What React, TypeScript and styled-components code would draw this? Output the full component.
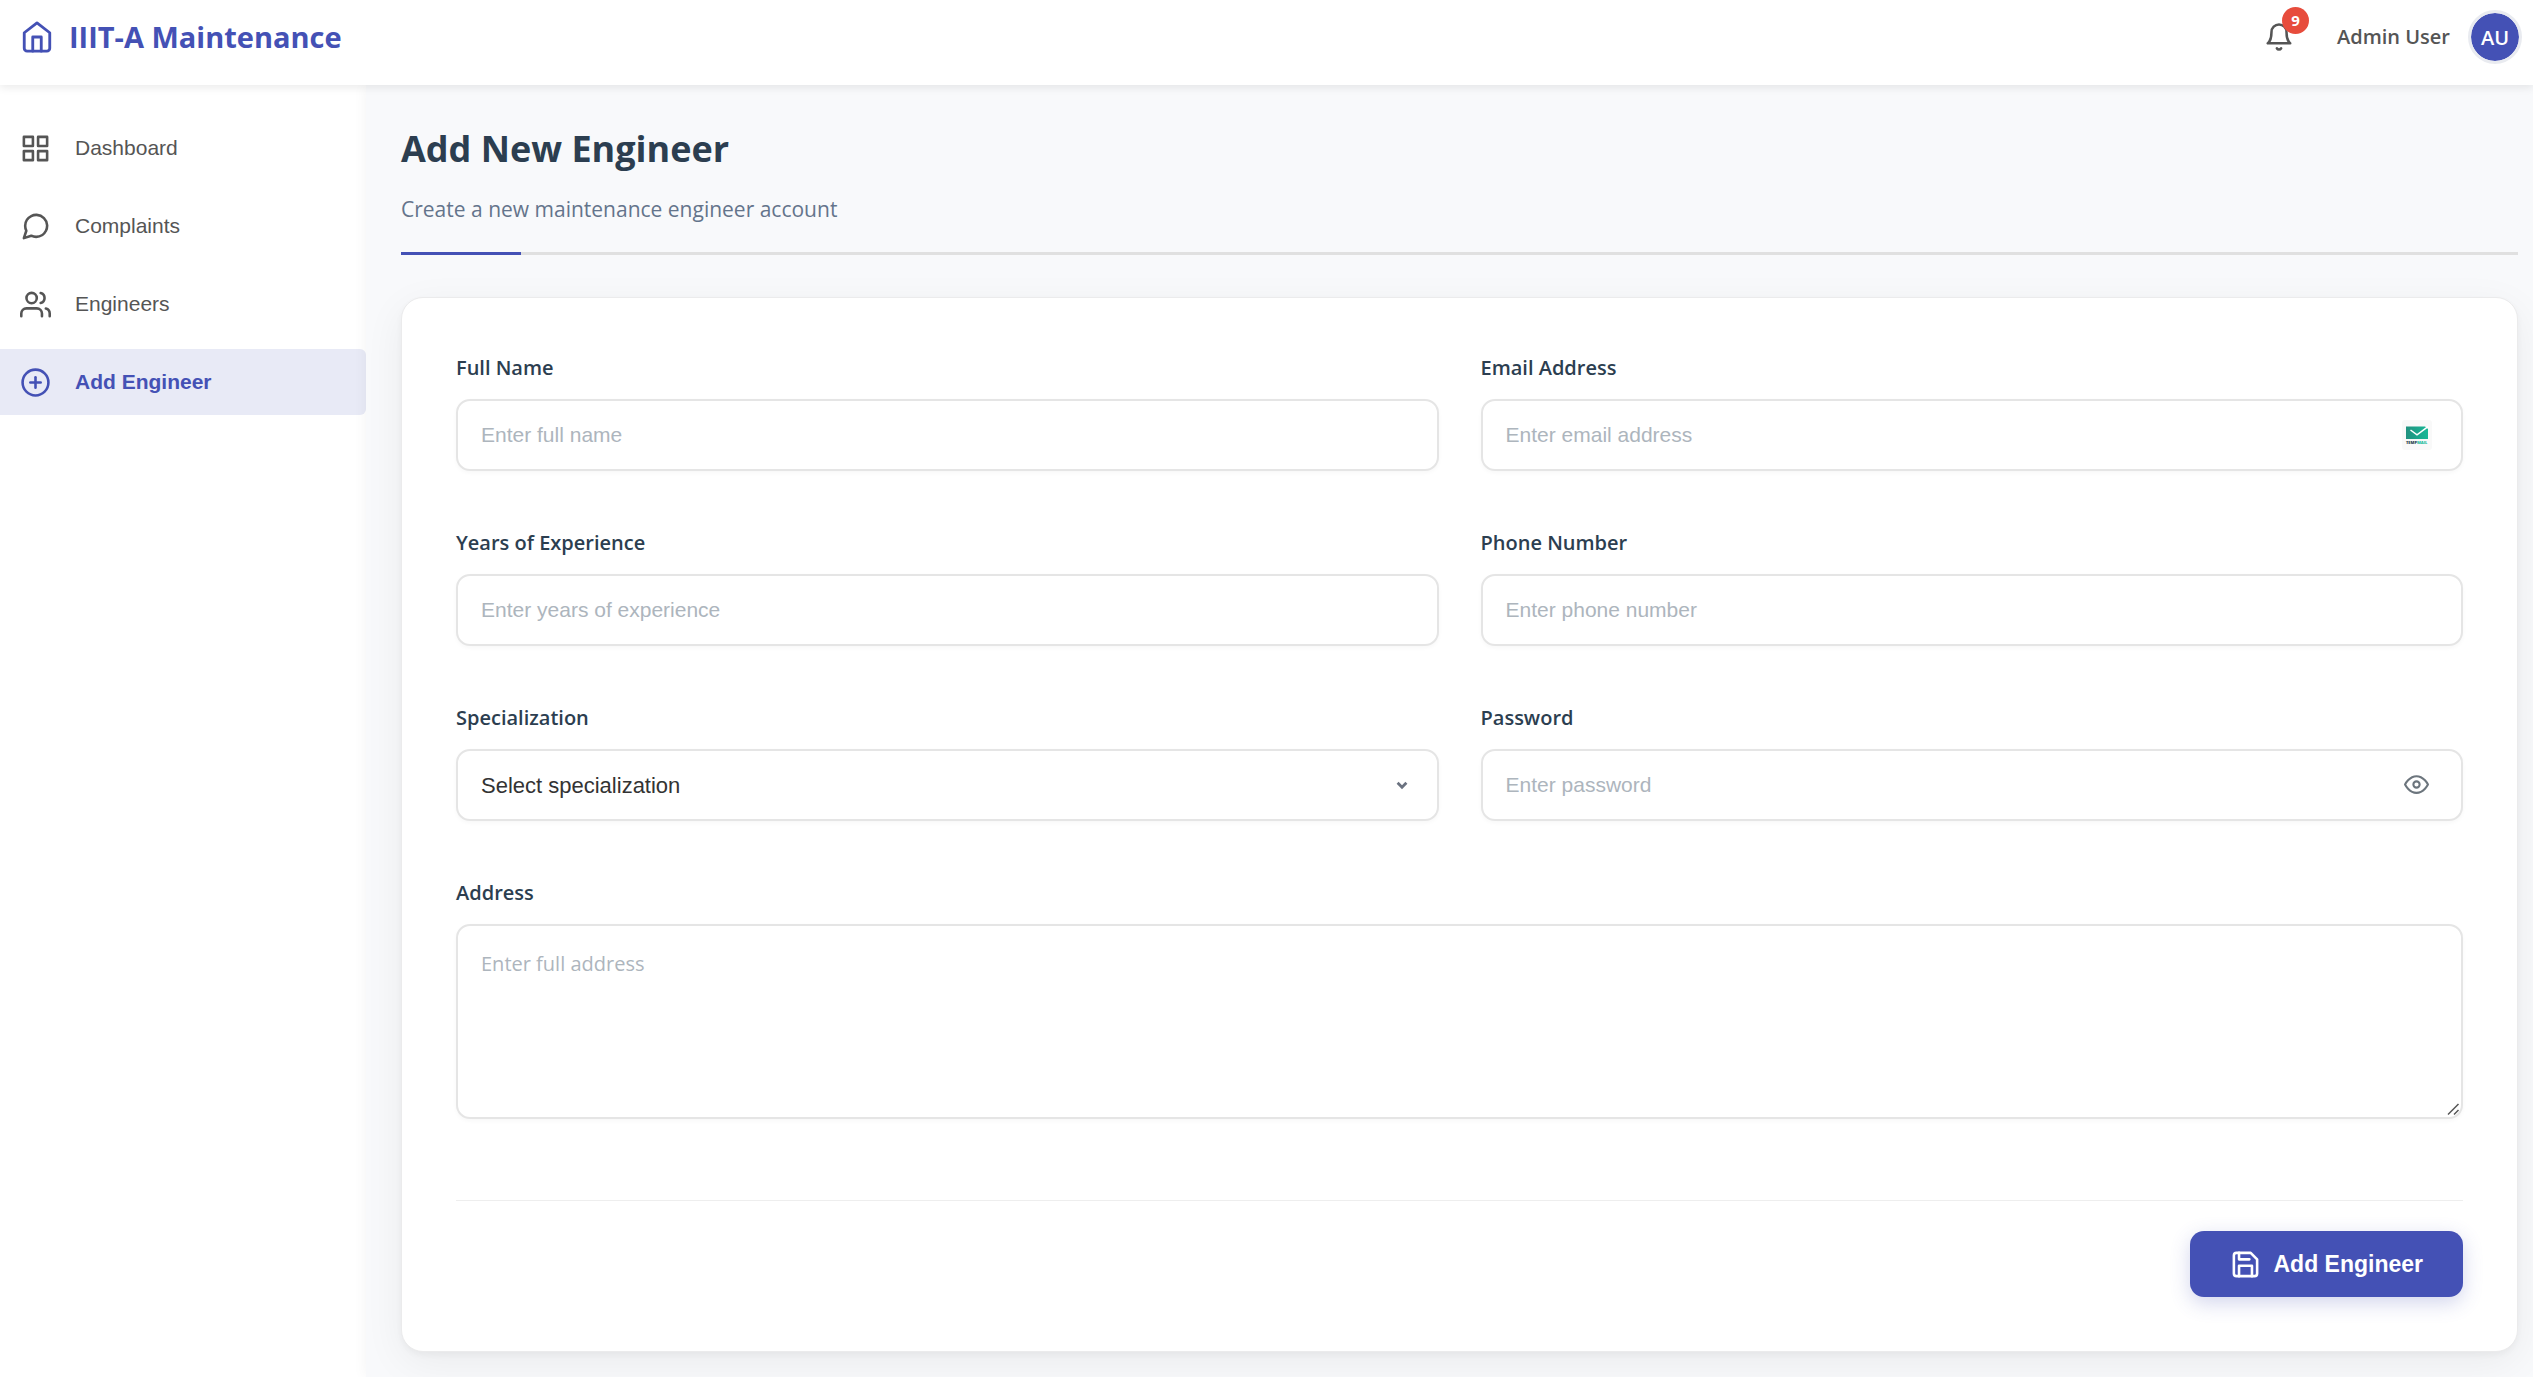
import React, { useState } from "react";
import styled, { createGlobalStyle, css } from "styled-components";
import {
  FiBell,
  FiEye,
  FiGrid,
  FiHome,
  FiMessageCircle,
  FiPlusCircle,
  FiSave,
  FiUsers,
} from "react-icons/fi";

const colors = {
  primary: "#4451b5",
  primarySoft: "#e8eaf6",
  page: "#f8f9fb",
  heading: "#2c3e50",
  muted: "#64748b",
  text: "#555555",
  placeholder: "#adb5bd",
  border: "#e5e5e5",
  danger: "#e74c3c",
};

const humanist = `"Segoe UI", "Open Sans", "Noto Sans", sans-serif`;
const grotesque = `Arial, "Liberation Sans", sans-serif`;

const GlobalStyle = createGlobalStyle`
  *, *::before, *::after { box-sizing: border-box; }
  body {
    margin: 0;
    background: ${colors.page};
    font-family: ${humanist};
  }
`;

const Page = styled.div`
  display: flex;
  flex-direction: column;
  min-height: 100vh;
`;

const Header = styled.header`
  position: relative;
  z-index: 2;
  display: flex;
  align-items: center;
  justify-content: space-between;
  padding: 10px 11px 21px 20px;
  background: #ffffff;
  box-shadow: 0 3px 8px rgba(0, 0, 0, 0.08);
`;

const Brand = styled.a`
  display: flex;
  align-items: center;
  gap: 15px;
  color: ${colors.primary};
  font-size: 29px;
  line-height: 40px;
  font-weight: 700;
  text-decoration: none;
`;

const HeaderActions = styled.div`
  display: flex;
  align-items: center;
`;

const BellButton = styled.button`
  position: relative;
  display: flex;
  margin-right: 43px;
  padding: 0;
  border: 0;
  background: none;
  color: ${colors.text};
  cursor: pointer;
`;

const Badge = styled.span`
  position: absolute;
  top: -15px;
  right: -15px;
  width: 27px;
  height: 27px;
  border-radius: 50%;
  background: ${colors.danger};
  color: #ffffff;
  font: 700 15px/27px ${humanist};
  text-align: center;
`;

const UserName = styled.span`
  margin-right: 18px;
  color: ${colors.text};
  font-size: 20px;
  line-height: 32px;
  font-weight: 600;
`;

const Avatar = styled.div`
  display: grid;
  place-items: center;
  width: 54px;
  height: 54px;
  border: 3px solid #e9ebf0;
  border-radius: 50%;
  background: ${colors.primary};
  background-clip: padding-box;
  color: #ffffff;
  font-size: 20px;
  font-weight: 600;
`;

const Body = styled.div`
  display: flex;
  flex: 1;
`;

const Sidebar = styled.nav`
  display: flex;
  flex-direction: column;
  flex: none;
  gap: 12px;
  width: 366px;
  padding-top: 30px;
  background: #ffffff;
`;

const NavLink = styled.a<{ $active?: boolean }>`
  display: flex;
  align-items: center;
  gap: 24px;
  height: 66px;
  padding-left: 20px;
  border-radius: 0 6px 6px 0;
  color: ${colors.text};
  font: 400 21px/32px ${grotesque};
  text-decoration: none;

  ${({ $active }) =>
    $active &&
    css`
      background: ${colors.primarySoft};
      color: ${colors.primary};
      font-weight: 700;
    `}
`;

const Main = styled.main`
  flex: 1;
  min-width: 0;
  padding: 40px 15px 24px 35px;
  box-shadow: 0 0 14px rgba(0, 0, 0, 0.05);
  background: ${colors.page};
`;

const PageHeader = styled.div`
  display: flex;
  flex-direction: column;
  gap: 20px;
  padding-bottom: 27px;
`;

const Title = styled.h1`
  margin: 0;
  color: ${colors.heading};
  font-size: 36px;
  line-height: 48px;
  font-weight: 700;
`;

const Subtitle = styled.p`
  margin: 0;
  color: ${colors.muted};
  font-size: 21px;
  line-height: 32px;
`;

const Rule = styled.div`
  height: 3px;
  margin-bottom: 42px;
  background: #e0e0e0;

  &::before {
    content: "";
    display: block;
    width: 120px;
    height: 100%;
    background: ${colors.primary};
  }
`;

const Card = styled.form`
  padding: 54px;
  border: 1px solid #ebebec;
  border-radius: 22px;
  background: #ffffff;
  box-shadow: 0 11px 42px rgba(0, 0, 0, 0.06), 0 3px 6px rgba(0, 0, 0, 0.04);
`;

const Fields = styled.div`
  display: grid;
  grid-template-columns: 1fr 1fr;
  gap: 56px 42px;
`;

const Field = styled.div<{ $wide?: boolean }>`
  display: flex;
  flex-direction: column;
  gap: 15px;
  grid-column: ${({ $wide }) => ($wide ? "1 / -1" : "auto")};
`;

const Label = styled.label`
  color: ${colors.heading};
  font-size: 20px;
  line-height: 32px;
  font-weight: 600;
`;

const Control = styled.div`
  position: relative;
`;

const box = css`
  display: block;
  width: 100%;
  border: 2px solid ${colors.border};
  border-radius: 14px;
  background: #ffffff;
  color: #333333;
  box-shadow: 0 2px 4px rgba(0, 0, 0, 0.03);
  outline: none;

  &:focus {
    border-color: ${colors.primary};
  }

  &::placeholder {
    color: ${colors.placeholder};
    opacity: 1;
  }
`;

const Input = styled.input`
  ${box}
  height: 72px;
  padding: 0 72px 0 23px;
  font: 400 21px ${grotesque};
`;

const Select = styled.select`
  ${box}
  height: 72px;
  padding: 0 64px 0 23px;
  appearance: none;
  font: 400 22px ${grotesque};
`;

const TextArea = styled.textarea`
  ${box}
  height: 195px;
  padding: 22px 23px;
  font: 400 20px/32px ${humanist};
  resize: vertical;

  &::-webkit-resizer {
    background: transparent;
  }
`;

const Grip = styled.span`
  position: absolute;
  right: 3px;
  bottom: 3px;
  display: flex;
  pointer-events: none;
`;

const Adornment = styled.span`
  position: absolute;
  top: 0;
  right: 31px;
  display: flex;
  align-items: center;
  height: 100%;
  pointer-events: none;
`;

const EyeButton = styled.button`
  position: absolute;
  top: 0;
  right: 31px;
  display: flex;
  align-items: center;
  height: 100%;
  padding: 0 3px 2px;
  border: 0;
  background: none;
  color: #6c757d;
  cursor: pointer;
`;

const Footer = styled.div`
  display: flex;
  justify-content: flex-end;
  margin-top: 81px;
  padding-top: 30px;
  border-top: 1px solid #eeeeee;
`;

const SubmitButton = styled.button`
  display: flex;
  align-items: center;
  gap: 12px;
  height: 66px;
  padding: 0 40px;
  border: 0;
  border-radius: 14px;
  background: ${colors.primary};
  box-shadow: 0 6px 20px rgba(68, 81, 181, 0.24);
  color: #ffffff;
  font: 700 23px ${grotesque};
  cursor: pointer;
`;

const Chevron = () => (
  <svg width="12" height="9" viewBox="0 0 12 9" fill="none" aria-hidden="true">
    <path d="M1.6 1.8 6 6.2l4.4-4.4" stroke="#6b7280" strokeWidth="2.8" />
  </svg>
);

const GripLines = () => (
  <svg width="13" height="13" viewBox="0 0 13 13" stroke="#555555" strokeWidth="1.5" aria-hidden="true">
    <path d="M1 11.5 11.5 1M7 11.5l4.5-4.5" />
  </svg>
);

const TempMailLogo = () => (
  <svg width="30" height="30" viewBox="0 0 30 30" aria-hidden="true">
    <defs>
      <linearGradient id="mail" x1="0" x2="1">
        <stop offset="0" stopColor="#21917f" />
        <stop offset="1" stopColor="#17b897" />
      </linearGradient>
    </defs>
    <rect width="30" height="30" rx="3" fill="#f9f9f9" />
    <path d="M4 6.5h19l3 2.6v9.9H4z" fill="url(#mail)" />
    <path d="M8.5 10 15 14.8 26 6.6" fill="none" stroke="#ffffff" strokeWidth="1.5" />
    <text x="4" y="23.5" fontFamily="Open Sans, sans-serif" fontWeight="800" fontSize="4" fill="#1d3a4a">
      TEMP<tspan fill="#1abc9c">MAIL</tspan>
    </text>
  </svg>
);

const navItems = [
  { label: "Dashboard", icon: FiGrid },
  { label: "Complaints", icon: FiMessageCircle },
  { label: "Engineers", icon: FiUsers },
  { label: "Add Engineer", icon: FiPlusCircle, active: true },
];

export default function App() {
  const [showPassword, setShowPassword] = useState(false);

  return (
    <Page>
      <GlobalStyle />
      <Header>
        <Brand href="#">
          <FiHome size={34} />
          IIIT-A Maintenance
        </Brand>
        <HeaderActions>
          <BellButton type="button" aria-label="Notifications">
            <FiBell size={30} />
            <Badge>9</Badge>
          </BellButton>
          <UserName>Admin User</UserName>
          <Avatar>AU</Avatar>
        </HeaderActions>
      </Header>
      <Body>
        <Sidebar>
          {navItems.map(({ label, icon: Icon, active }) => (
            <NavLink key={label} href="#" $active={active}>
              <Icon size={31} />
              {label}
            </NavLink>
          ))}
        </Sidebar>
        <Main>
          <PageHeader>
            <Title>Add New Engineer</Title>
            <Subtitle>Create a new maintenance engineer account</Subtitle>
          </PageHeader>
          <Rule />
          <Card onSubmit={(e) => e.preventDefault()}>
            <Fields>
              <Field>
                <Label htmlFor="name">Full Name</Label>
                <Input id="name" type="text" placeholder="Enter full name" />
              </Field>
              <Field>
                <Label htmlFor="email">Email Address</Label>
                <Control>
                  <Input id="email" type="email" placeholder="Enter email address" />
                  <Adornment>
                    <TempMailLogo />
                  </Adornment>
                </Control>
              </Field>
              <Field>
                <Label htmlFor="experience">Years of Experience</Label>
                <Input id="experience" type="text" inputMode="numeric" placeholder="Enter years of experience" />
              </Field>
              <Field>
                <Label htmlFor="phone">Phone Number</Label>
                <Input id="phone" type="tel" placeholder="Enter phone number" />
              </Field>
              <Field>
                <Label htmlFor="specialization">Specialization</Label>
                <Control>
                  <Select id="specialization" defaultValue="">
                    <option value="">Select specialization</option>
                  </Select>
                  <Adornment>
                    <Chevron />
                  </Adornment>
                </Control>
              </Field>
              <Field>
                <Label htmlFor="password">Password</Label>
                <Control>
                  <Input
                    id="password"
                    type={showPassword ? "text" : "password"}
                    placeholder="Enter password"
                  />
                  <EyeButton
                    type="button"
                    aria-label="Show password"
                    onClick={() => setShowPassword(!showPassword)}
                  >
                    <FiEye size={25} />
                  </EyeButton>
                </Control>
              </Field>
              <Field $wide>
                <Label htmlFor="address">Address</Label>
                <Control>
                  <TextArea id="address" placeholder="Enter full address" />
                  <Grip>
                    <GripLines />
                  </Grip>
                </Control>
              </Field>
            </Fields>
            <Footer>
              <SubmitButton type="submit">
                <FiSave size={31} />
                Add Engineer
              </SubmitButton>
            </Footer>
          </Card>
        </Main>
      </Body>
    </Page>
  );
}
